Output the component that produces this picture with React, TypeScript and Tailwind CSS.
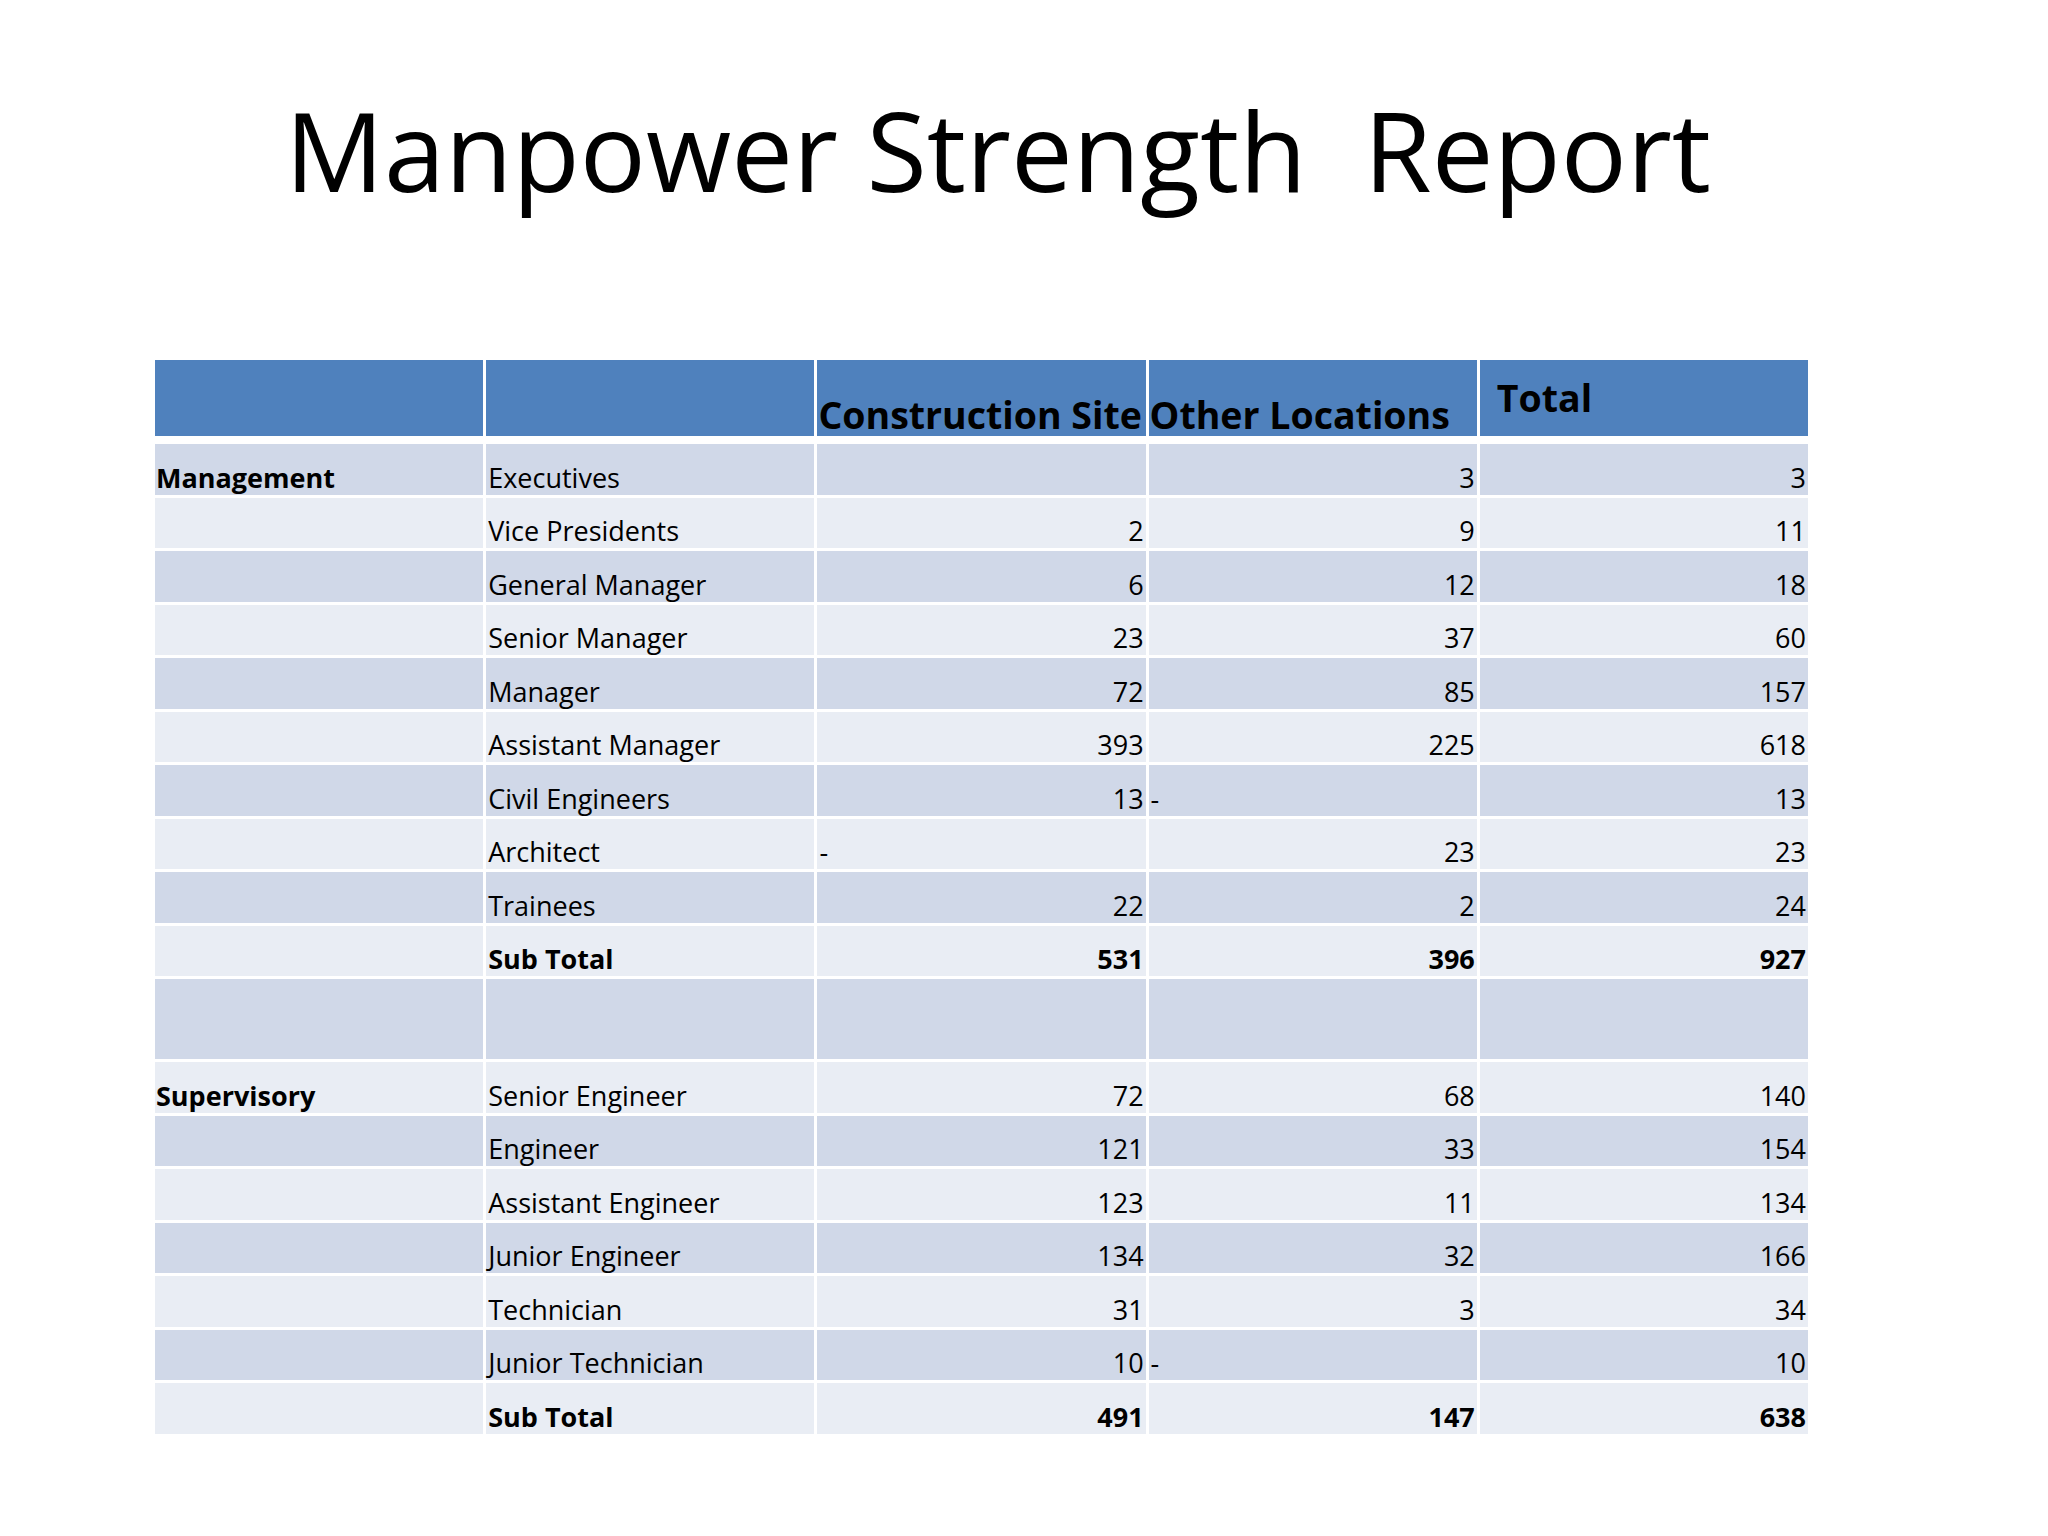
import React from "react";

type Row = {
  c1?: string;
  c2?: string;
  c3?: string;
  c4?: string;
  c5?: string;
  bold?: boolean;
  tall?: boolean;
};

const rows: Row[] = [
  { c1: "Management", c2: "Executives", c3: "", c4: "3", c5: "3" },
  { c2: "Vice Presidents", c3: "2", c4: "9", c5: "11" },
  { c2: "General Manager", c3: "6", c4: "12", c5: "18" },
  { c2: "Senior Manager", c3: "23", c4: "37", c5: "60" },
  { c2: "Manager", c3: "72", c4: "85", c5: "157" },
  { c2: "Assistant Manager", c3: "393", c4: "225", c5: "618" },
  { c2: "Civil Engineers", c3: "13", c4: "-", c5: "13" },
  { c2: "Architect", c3: "-", c4: "23", c5: "23" },
  { c2: "Trainees", c3: "22", c4: "2", c5: "24" },
  { c2: "Sub Total", c3: "531", c4: "396", c5: "927", bold: true },
  { tall: true },
  { c1: "Supervisory", c2: "Senior Engineer", c3: "72", c4: "68", c5: "140" },
  { c2: "Engineer", c3: "121", c4: "33", c5: "154" },
  { c2: "Assistant Engineer", c3: "123", c4: "11", c5: "134" },
  { c2: "Junior Engineer", c3: "134", c4: "32", c5: "166" },
  { c2: "Technician", c3: "31", c4: "3", c5: "34" },
  { c2: "Junior Technician", c3: "10", c4: "-", c5: "10" },
  { c2: "Sub Total", c3: "491", c4: "147", c5: "638", bold: true },
];

function NumCell({ v, bold, bg }: { v?: string; bold?: boolean; bg: string }) {
  const isDash = v === "-";
  return (
    <div
      className={
        bg +
        " flex items-end leading-[34px] whitespace-nowrap " +
        (isDash ? "justify-start pl-[2px]" : "justify-end pr-[2px]") +
        (bold ? " font-bold" : "")
      }
    >
      {v}
    </div>
  );
}

export default function App() {
  return (
    <div className="w-[2048px] h-[1536px] bg-white text-black font-['Open_Sans',sans-serif] overflow-hidden">
      <div className="flex justify-center pr-[52px] pt-[94px]">
        <h1 className="text-[110px] leading-[110px] font-normal whitespace-pre">
          Manpower Strength{"\u00a0 "}Report
        </h1>
      </div>

      <div className="ml-[155px] mt-[156px] w-[1653px] flex flex-col gap-y-[3px] text-[27px]">
        <div className="grid grid-cols-5 gap-x-[3px] h-[76px] mb-[5px] text-[37.5px] font-bold">
          <div className="bg-[#4f81bd]" />
          <div className="bg-[#4f81bd]" />
          <div className="bg-[#4f81bd] flex items-end leading-[42px] pl-[1px] whitespace-nowrap">
            Construction Site
          </div>
          <div className="bg-[#4f81bd] flex items-end leading-[42px] pl-[1px] whitespace-nowrap">
            Other Locations
          </div>
          <div className="bg-[#4f81bd] flex items-end leading-[42px] pl-[17px] pb-[17px] whitespace-nowrap">
            Total
          </div>
        </div>

        {rows.map((r, i) => {
          const bg = i % 2 === 0 ? "bg-[#d0d8e8]" : "bg-[#e9edf4]";
          return (
            <div
              key={i}
              className={
                "grid grid-cols-5 gap-x-[3px] " +
                (r.tall ? "h-[80px]" : "h-[50.5px]")
              }
            >
              <div className={bg + " flex items-end leading-[34px] pl-[1px] font-bold whitespace-nowrap"}>
                {r.c1}
              </div>
              <div
                className={
                  bg +
                  " flex items-end leading-[34px] pl-[2px] whitespace-nowrap" +
                  (r.bold ? " font-bold" : "")
                }
              >
                {r.c2}
              </div>
              <NumCell v={r.c3} bold={r.bold} bg={bg} />
              <NumCell v={r.c4} bold={r.bold} bg={bg} />
              <NumCell v={r.c5} bold={r.bold} bg={bg} />
            </div>
          );
        })}
      </div>
    </div>
  );
}
